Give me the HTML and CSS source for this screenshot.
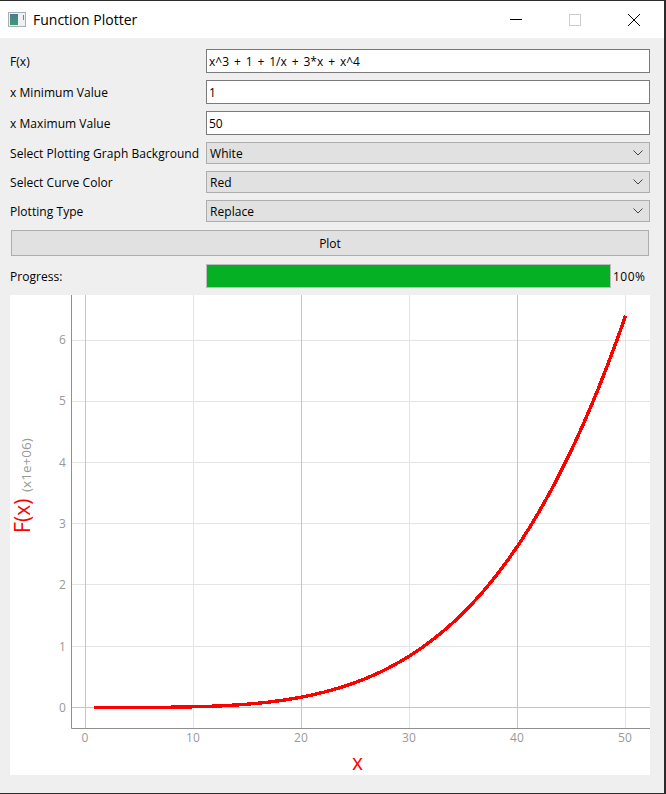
FILE: index.html
```html
<!DOCTYPE html>
<html lang="en">

<head>
    <meta charset="UTF-8">
    <meta name="viewport" content="width=device-width, initial-scale=1.0">
    <title>Function Plotter</title>
    <link rel="stylesheet" href="styles.css">
</head>

<body>
    <div class="window">
        <div class="titlebar">
            <svg class="appicon" width="18" height="16" viewBox="0 0 18 16">
                <defs>
                    <linearGradient id="iconfill" x1="0" y1="0" x2="0" y2="1">
                        <stop offset="0" stop-color="#4a7a92" />
                        <stop offset="1" stop-color="#3f9a72" />
                    </linearGradient>
                </defs>
                <rect x="0.5" y="0.5" width="17" height="14" fill="#eef1f1" stroke="#a9b0b0" />
                <rect x="2" y="2" width="8" height="11" fill="url(#iconfill)" />
                <rect x="15" y="3" width="1" height="5" fill="#5f8f88" />
            </svg>
            <span class="wintitle">Function Plotter</span>
            <div class="winbuttons">
                <svg class="winbtn" width="46" height="14" viewBox="0 0 46 14">
                    <path d="M17 6.5h12" stroke="#000" fill="none" />
                </svg>
                <svg class="winbtn" width="46" height="14" viewBox="0 0 46 14">
                    <rect x="17.5" y="1.5" width="11" height="11" stroke="#ccc" fill="none" />
                </svg>
                <svg class="winbtn" width="46" height="14" viewBox="0 0 46 14">
                    <path d="M17 1l12 12M29 1l-12 12" stroke="#000" fill="none" />
                </svg>
            </div>
        </div>

        <div class="content">
            <div class="row row-input">
                <label class="lbl">F(x)</label>
                <input class="field" type="text" value="x^3 + 1 + 1/x + 3*x + x^4">
            </div>
            <div class="row row-input">
                <label class="lbl">x Minimum Value</label>
                <input class="field" type="text" value="1">
            </div>
            <div class="row row-input">
                <label class="lbl">x Maximum Value</label>
                <input class="field" type="text" value="50">
            </div>
            <div class="row row-combo">
                <label class="lbl">Select Plotting Graph Background</label>
                <div class="combo">White
                    <svg class="arrow" width="10" height="6" viewBox="0 0 10 6"><path d="M0.5 0.5l4.5 4.5 4.5-4.5" stroke="#444" fill="none" /></svg>
                </div>
            </div>
            <div class="row row-combo">
                <label class="lbl">Select Curve Color</label>
                <div class="combo">Red
                    <svg class="arrow" width="10" height="6" viewBox="0 0 10 6"><path d="M0.5 0.5l4.5 4.5 4.5-4.5" stroke="#444" fill="none" /></svg>
                </div>
            </div>
            <div class="row row-combo">
                <label class="lbl">Plotting Type</label>
                <div class="combo">Replace
                    <svg class="arrow" width="10" height="6" viewBox="0 0 10 6"><path d="M0.5 0.5l4.5 4.5 4.5-4.5" stroke="#444" fill="none" /></svg>
                </div>
            </div>
            <button class="plotbtn">Plot</button>
            <div class="row row-progress">
                <label class="lbl">Progress:</label>
                <div class="bar"><div class="barfill"></div></div>
                <span class="pct">100%</span>
            </div>

            <svg class="plot" width="640" height="480" viewBox="0 0 640 480">
                <g class="grid-minor">
                    <path d="M183.5 0v433M399.5 0v433M615.5 0v433" />
                    <path d="M61 45.5h579M61 106.5h579M61 167.5h579M61 228.5h579M61 289.5h579M61 351.5h579" />
                </g>
                <g class="grid-major">
                    <path d="M75.5 0v433M291.5 0v433M507.5 0v433" />
                    <path d="M61 412.5h579" />
                </g>
                <path class="axis" d="M61.5 0v433.5H640" />

                <polyline id="curve" class="curve" points="" />

                <g class="tick tick-y">
                    <text x="56" y="49">6</text>
                    <text x="56" y="110">5</text>
                    <text x="56" y="172">4</text>
                    <text x="56" y="233">3</text>
                    <text x="56" y="294">2</text>
                    <text x="56" y="356">1</text>
                    <text x="56" y="417">0</text>
                </g>
                <g class="tick tick-x">
                    <text x="75" y="447">0</text>
                    <text x="183" y="447">10</text>
                    <text x="291" y="447">20</text>
                    <text x="399" y="447">30</text>
                    <text x="507" y="447">40</text>
                    <text x="615" y="447">50</text>
                </g>
                <text class="axis-title" x="342" y="475">x</text>
                <text class="axis-title" transform="translate(20 238) rotate(-90)">F(x)</text>
                <text class="axis-unit" transform="translate(21 197) rotate(-90)">(x1e+06)</text>
            </svg>
        </div>
    </div>

    <script src="plot.js"></script>
</body>

</html>
```

FILE: styles.css
```css
html,
body {
    margin: 0;
    padding: 0;
}

body {
    width: 666px;
    height: 794px;
    overflow: hidden;
    font-family: "Open Sans", "Noto Sans", sans-serif;
    font-size: 12px;
    color: #000;
}

.window {
    box-sizing: border-box;
    width: 666px;
    height: 794px;
    display: flex;
    flex-direction: column;
    background-color: #efefef;
    border-top: 1px solid #2b2b2b;
    border-bottom: 1px solid #2b2b2b;
    border-right: 2px solid #2b2b2b;
}

.titlebar {
    height: 37px;
    flex-shrink: 0;
    display: flex;
    align-items: center;
    background-color: white;
    padding-left: 8px;
}

.appicon {
    margin-right: 7px;
}

.wintitle {
    font-size: 14px;
}

.winbuttons {
    margin-left: auto;
    display: flex;
    gap: 13px;
    padding-right: 7px;
}

.content {
    display: flex;
    flex-direction: column;
    padding: 11px 14px 0 10px;
    letter-spacing: 0.05px;
}

.row {
    display: flex;
    align-items: center;
}

.row-input {
    height: 24px;
    margin-bottom: 7px;
}

.row-combo {
    height: 22px;
    margin-bottom: 7px;
}

.lbl {
    width: 196px;
    flex-shrink: 0;
    white-space: nowrap;
}

.field {
    box-sizing: border-box;
    width: 444px;
    height: 24px;
    margin: 0;
    padding: 0 2px;
    border: 1px solid #7a7a7a;
    border-radius: 0;
    background-color: white;
    font: inherit;
    word-spacing: 1.8px;
    color: #000;
}

.combo {
    box-sizing: border-box;
    width: 444px;
    height: 22px;
    display: flex;
    align-items: center;
    justify-content: space-between;
    padding: 0 6px 0 3px;
    border: 1px solid #adadad;
    background-color: #e1e1e1;
}

.plotbtn {
    box-sizing: border-box;
    width: 638px;
    height: 26px;
    margin: 1px 0 8px 1px;
    padding: 0;
    border: 1px solid #adadad;
    border-radius: 0;
    background-color: #e1e1e1;
    font: inherit;
    color: #000;
}

.row-progress {
    height: 24px;
    margin-bottom: 7px;
}

.bar {
    box-sizing: border-box;
    width: 405px;
    height: 24px;
    border: 1px solid #bcbcbc;
    background-color: #e6e6e6;
}

.barfill {
    width: 100%;
    height: 100%;
    background-color: #06b025;
}

.pct {
    margin-left: 2px;
    letter-spacing: 0.5px;
}

.plot {
    display: block;
    overflow: visible;
    background-color: white;
}

.grid-minor path {
    stroke: #e4e4e4;
    fill: none;
}

.grid-major path {
    stroke: #c4c4c4;
    fill: none;
}

.axis {
    stroke: #8f8f8f;
    fill: none;
}

.curve {
    stroke: #ff0000;
    stroke-width: 3.4;
    stroke-linecap: square;
    fill: none;
    shape-rendering: crispEdges;
}

.tick {
    font-size: 12px;
    fill: #999;
}

.tick-y {
    text-anchor: end;
}

.tick-x {
    text-anchor: middle;
}

.axis-title {
    font-size: 21px;
    fill: #ff0000;
}

.axis-unit {
    font-size: 13.5px;
    fill: #999;
}
```

FILE: plot.js
```js
// x^3 + 1 + 1/x + 3*x + x^4 from 1 to 50
function f(x) {
    return x * x * x + 1 + 1 / x + 3 * x + x * x * x * x;
}

var pts = [];
for (var x = 1; x <= 50; x += 0.5) {
    var px = 75 + x * 10.8;
    var py = 412.5 - f(x) * 61.2 / 1000000;
    pts.push(px.toFixed(1) + "," + py.toFixed(1));
}
document.getElementById("curve").setAttribute("points", pts.join(" "));
```
